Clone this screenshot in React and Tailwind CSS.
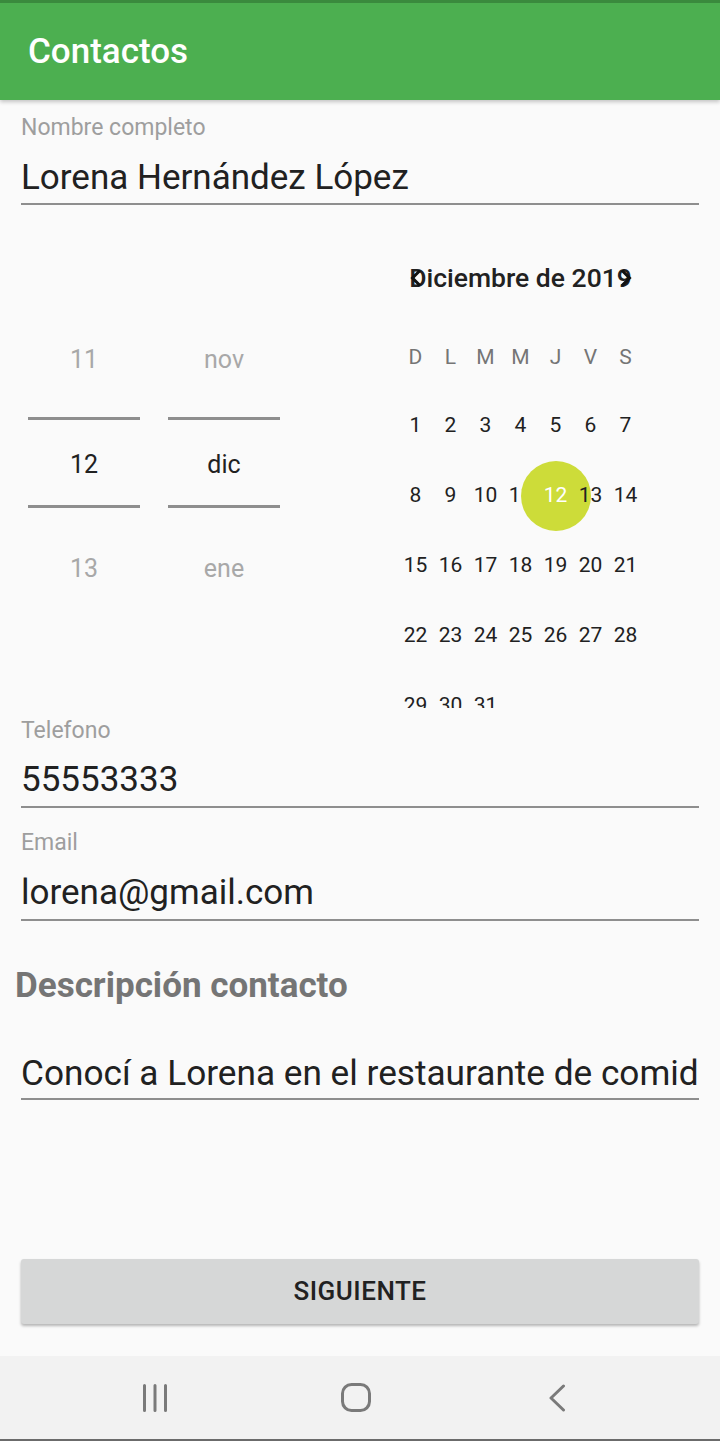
import React from 'react';

const dayNames = ['D', 'L', 'M', 'M', 'J', 'V', 'S'];

const weeks = [
  [1, 2, 3, 4, 5, 6, 7],
  [8, 9, 10, 11, 12, 13, 14],
  [15, 16, 17, 18, 19, 20, 21],
  [22, 23, 24, 25, 26, 27, 28],
  [29, 30, 31, null, null, null, null],
];

function Underline({ className = '' }) {
  return <div className={`h-[2px] shrink-0 bg-[#8e8e8e] ${className}`} />;
}

function SpinnerColumn({ prev, current, next }) {
  return (
    <div className="w-[112px] flex flex-col pt-[125px]">
      <div className="h-[60px] shrink-0 flex items-center justify-center text-[25px] text-[#a8a8a8]">{prev}</div>
      <div className="mt-[27px] h-[3px] shrink-0 bg-[#8e8e8e]" />
      <div className="h-[85px] shrink-0 pt-[5px] flex items-center justify-center text-[25px] text-[#212121]">{current}</div>
      <div className="h-[3px] shrink-0 bg-[#8e8e8e]" />
      <div className="mt-[31px] h-[60px] shrink-0 flex items-center justify-center text-[25px] text-[#a8a8a8]">{next}</div>
    </div>
  );
}

function Calendar() {
  return (
    <div className="ml-[118px] w-[245px] h-[503px] overflow-hidden">
      <div className="relative mt-[50px] h-[46px] flex items-center justify-center">
        <span className="text-[26.5px] font-medium text-[#212121]">Diciembre de 2019</span>
        <svg className="absolute left-[12px] top-[14px]" width="12" height="18" viewBox="0 0 12 18" fill="none">
          <path d="M10 1.5 L2.5 9 L10 16.5" stroke="#111" strokeWidth="3" />
        </svg>
        <svg className="absolute left-[222px] top-[14px]" width="12" height="18" viewBox="0 0 12 18" fill="none">
          <path d="M2 1.5 L9.5 9 L2 16.5" stroke="#111" strokeWidth="3" />
        </svg>
      </div>

      <div className="mt-[37px] h-[40px] grid grid-cols-7 items-center text-center text-[21px] text-[#757575]">
        {dayNames.map((d, i) => (
          <span key={i}>{d}</span>
        ))}
      </div>

      <div className="mt-[13px]">
        {weeks.map((week, wi) => (
          <div key={wi} className="h-[70px] grid grid-cols-7 items-center text-center text-[21px] text-[#212121]">
            {week.map((day, di) => (
              <div key={di} className="relative flex items-center justify-center h-full">
                {day === 12 && (
                  <div className="absolute left-1/2 top-1/2 -translate-x-1/2 -translate-y-1/2 w-[70px] h-[70px] rounded-full bg-[#cddc39]" />
                )}
                {day && <span className={`relative ${day === 12 ? 'text-white' : ''}`}>{day}</span>}
              </div>
            ))}
          </div>
        ))}
      </div>
    </div>
  );
}

export default function App() {
  return (
    <div className="w-[720px] h-[1441px] bg-[#fafafa] flex flex-col overflow-hidden font-['Roboto',sans-serif]">
      <header className="relative z-10 h-[100px] shrink-0 bg-[#4caf50] border-t-[3px] border-[#3a8a3d] shadow-[0_2px_4px_rgba(0,0,0,0.22)] flex items-center pl-[28px]">
        <h1 className="text-[35px] font-medium text-white leading-none">Contactos</h1>
      </header>

      <main className="flex-1 flex flex-col px-[21px]">
        <div className="mt-[16px] h-[24px] shrink-0 leading-[24px] text-[23px] text-[#9e9e9e]">Nombre completo</div>
        <div className="mt-[17px] h-[42px] shrink-0 leading-[42px] text-[35px] text-[#212121]">Lorena Hernández López</div>
        <Underline className="mt-[4px]" />

        <div className="flex h-[503px] shrink-0">
          <div className="ml-[7px] flex gap-[28px]">
            <SpinnerColumn prev="11" current="12" next="13" />
            <SpinnerColumn prev="nov" current="dic" next="ene" />
          </div>
          <Calendar />
        </div>

        <div className="mt-[11px] h-[24px] shrink-0 leading-[24px] text-[23px] text-[#9e9e9e]">Telefono</div>
        <div className="mt-[16px] h-[42px] shrink-0 leading-[42px] text-[35px] text-[#212121]">55553333</div>
        <Underline className="mt-[5px]" />

        <div className="mt-[23px] h-[24px] shrink-0 leading-[24px] text-[23px] text-[#9e9e9e]">Email</div>
        <div className="mt-[17px] h-[42px] shrink-0 leading-[42px] text-[35px] text-[#212121]">lorena@gmail.com</div>
        <Underline className="mt-[5px]" />

        <div className="mt-[45px] -ml-[6px] h-[40px] shrink-0 leading-[40px] text-[35px] font-bold text-[#757575]">
          Descripción contacto
        </div>
        <div className="mt-[46px] h-[42px] shrink-0 leading-[42px] text-[35.2px] text-[#212121] overflow-hidden whitespace-nowrap">
          Conocí a Lorena en el restaurante de comid
        </div>
        <Underline className="mt-[4px]" />

        <div className="mt-auto pb-[32px]">
          <button className="w-full h-[65px] rounded-[3px] bg-[#d6d7d7] shadow-[0_2px_3px_rgba(0,0,0,0.28)] text-[26px] font-medium text-[#212121] tracking-[0.5px]">
            SIGUIENTE
          </button>
        </div>
      </main>

      <nav className="h-[85px] shrink-0 bg-[#f2f2f2] border-b-2 border-[#6b6b6b] flex items-center pl-[95px] gap-[81px]">
        <div className="w-[120px] flex justify-center">
          <svg width="26" height="28" viewBox="0 0 26 28" fill="none">
            <path d="M2.5 1.5 V26.5 M13 1.5 V26.5 M23.5 1.5 V26.5" stroke="#7a7a7a" strokeWidth="3" strokeLinecap="round" />
          </svg>
        </div>
        <div className="w-[120px] flex justify-center">
          <svg width="30" height="29" viewBox="0 0 30 29" fill="none">
            <rect x="1.5" y="1.5" width="27" height="26" rx="9" stroke="#7a7a7a" strokeWidth="3" />
          </svg>
        </div>
        <div className="w-[120px] flex justify-center">
          <svg width="18" height="28" viewBox="0 0 18 28" fill="none">
            <path d="M15.5 2 L3 14 L15.5 26" stroke="#7a7a7a" strokeWidth="3" strokeLinecap="round" strokeLinejoin="round" />
          </svg>
        </div>
      </nav>
    </div>
  );
}
